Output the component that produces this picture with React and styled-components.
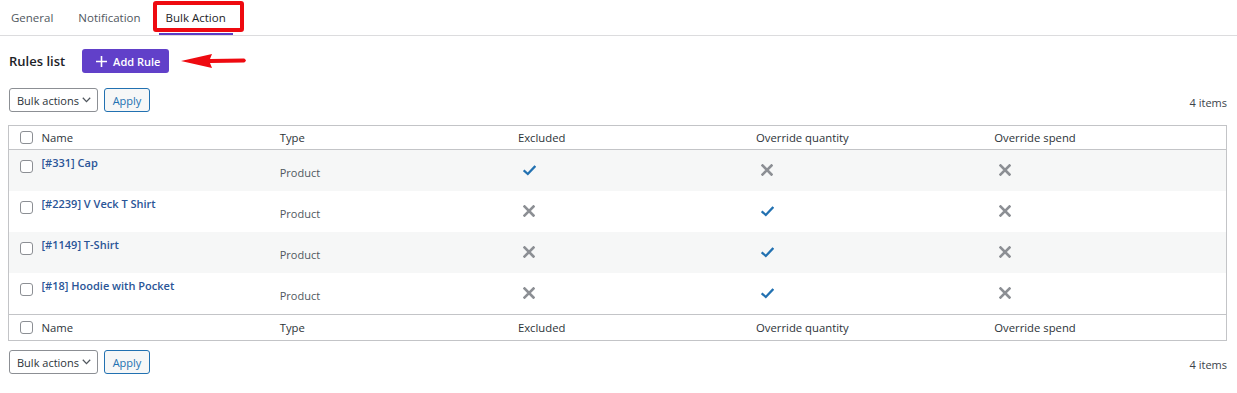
import React from "react";
import styled, { createGlobalStyle } from "styled-components";

const Global = createGlobalStyle`
  html, body { margin: 0; padding: 0; background: #fff; }
  body { font-family: "Open Sans", "Noto Sans", sans-serif; font-size: 11.5px; color: #2c3338; }
  * { box-sizing: border-box; }
`;

const Page = styled.div`
  width: 1237px;
  padding-bottom: 19px;
`;

const TabNav = styled.nav`
  display: flex;
  gap: 11px;
  padding-left: 4px;
  border-bottom: 1px solid #dcdcde;
  height: 36px;
`;

const Tab = styled.div`
  position: relative;
  display: flex;
  align-items: center;
  padding: 1px 7px 0;
  height: 35px;
  font-size: 11.5px;
  white-space: nowrap;
  color: ${(p) => (p.$active ? "#1d2327" : "#50575e")};
  border-bottom: 2px solid ${(p) => (p.$active ? "#5b3cc4" : "transparent")};
`;

const Highlight = styled.span`
  position: absolute;
  left: -6px;
  right: -11px;
  top: 1px;
  bottom: 1px;
  border: 4px solid #ee0a10;
  border-radius: 3px;
  pointer-events: none;
`;

const Content = styled.div`
  padding: 0 10px 0 8px;
`;

const HeadingRow = styled.div`
  display: flex;
  align-items: center;
  margin-top: 13px;
  padding-left: 1px;
  height: 24px;
`;

const Title = styled.h2`
  margin: 0 17px 0 0;
  font-size: 13px;
  font-weight: 600;
  color: #1d2327;
  white-space: nowrap;
`;

const PrimaryButton = styled.button`
  display: flex;
  align-items: center;
  gap: 6px;
  height: 24px;
  width: 87px;
  padding: 0 0 0 14px;
  border: none;
  border-radius: 3px;
  background: #6140c9;
  color: #fff;
  font-family: inherit;
  font-size: 11px;
  font-weight: 600;
  white-space: nowrap;
`;

const Arrow = styled.svg`
  margin-left: 12px;
  display: block;
`;

const NavRow = styled.div`
  display: flex;
  align-items: center;
  margin-top: ${(p) => p.$top}px;
  padding-left: 1px;
  height: 24px;
`;

const Select = styled.div`
  display: flex;
  align-items: center;
  justify-content: space-between;
  width: 89px;
  height: 24px;
  padding: 0 6px 0 7px;
  border: 1px solid #8c8f94;
  border-radius: 3px;
  font-size: 11px;
  white-space: nowrap;
  color: #2c3338;
`;

const ApplyButton = styled.button`
  margin-left: 6px;
  width: 46px;
  height: 24px;
  border: 1px solid #2271b1;
  border-radius: 3px;
  background: #f6f7f7;
  color: #2271b1;
  font-family: inherit;
  font-size: 11px;
  padding: 0;
`;

const Count = styled.span`
  margin-left: auto;
  margin-top: 5px;
  font-size: 11px;
  color: #3c434a;
  white-space: nowrap;
`;

const Table = styled.table`
  margin-top: 13px;
  width: 1219px;
  border-collapse: collapse;
  table-layout: fixed;
  border: 1px solid #c3c4c7;
`;

const Th = styled.th`
  text-align: left;
  font-weight: 400;
  font-size: 11.3px;
  color: #2c3338;
  height: ${(p) => (p.$foot ? 26 : 24)}px;
  padding: 0 6px;
  vertical-align: middle;
  white-space: nowrap;
  ${(p) => (p.$foot ? "border-top: 1px solid #c3c4c7;" : "border-bottom: 1px solid #c3c4c7;")}
`;

const CheckTh = styled(Th)`
  width: 27px;
  padding: 0 0 0 11px;
`;

const Row = styled.tr`
  background: ${(p) => (p.$alt ? "#f6f7f7" : "#fff")};
`;

const Td = styled.td`
  height: ${(p) => (p.$h ? p.$h : 41)}px;
  padding: 4px 6px 0 6px;
  vertical-align: middle;
  font-size: 11px;
  color: #50575e;
`;

const TitleTd = styled(Td)`
  vertical-align: top;
  padding-top: 5px;
`;

const CheckTd = styled(Td)`
  vertical-align: top;
  padding: 10px 0 0 11px;
`;

const IconTd = styled(Td)`
  padding: 0 6px 0 11px;
`;

const Box = styled.span`
  display: block;
  width: 13px;
  height: 13px;
  border: 1px solid #8c8f94;
  border-radius: 3px;
  background: #fff;
`;

const RowLink = styled.a`
  color: #2a5597;
  font-weight: 600;
  font-size: 11px;
  text-decoration: none;
  white-space: nowrap;
`;

const Check = () => (
  <svg width="13" height="11" viewBox="0 0 13 11" style={{ display: "block" }}>
    <polyline points="1.5,6 4.8,9 11.5,1.8" fill="none" stroke="#2271b1" strokeWidth="2.3" strokeLinecap="square" />
  </svg>
);

const Cross = () => (
  <svg width="12" height="12" viewBox="0 0 12 12" style={{ display: "block" }}>
    <path d="M1.5 1.5L10.5 10.5M10.5 1.5L1.5 10.5" stroke="#8c8f94" strokeWidth="2.6" strokeLinecap="square" />
  </svg>
);

const Plus = () => (
  <svg width="11" height="11" viewBox="0 0 11 11" style={{ display: "block" }}>
    <path d="M5.5 0V11M0 5.5H11" stroke="#fff" strokeWidth="1.6" />
  </svg>
);

const Chevron = () => (
  <svg width="9" height="6" viewBox="0 0 9 6" style={{ display: "block" }}>
    <polyline points="0.8,0.8 4.5,4.6 8.2,0.8" fill="none" stroke="#50575e" strokeWidth="1.3" />
  </svg>
);

const rules = [
  { name: "[#331] Cap", ex: true, oq: false, os: false, h: 41 },
  { name: "[#2239] V Veck T Shirt", ex: false, oq: true, os: false, h: 41 },
  { name: "[#1149] T-Shirt", ex: false, oq: true, os: false, h: 41 },
  { name: "[#18] Hoodie with Pocket", ex: false, oq: true, os: false, h: 42 },
];

const Cols = ({ foot }) => (
  <tr>
    <CheckTh $foot={foot}><Box /></CheckTh>
    <Th $foot={foot}>Name</Th>
    <Th $foot={foot}>Type</Th>
    <Th $foot={foot}>Excluded</Th>
    <Th $foot={foot}>Override quantity</Th>
    <Th $foot={foot}>Override spend</Th>
  </tr>
);

const BulkNav = ({ top }) => (
  <NavRow $top={top}>
    <Select>
      Bulk actions
      <Chevron />
    </Select>
    <ApplyButton>Apply</ApplyButton>
    <Count>4 items</Count>
  </NavRow>
);

export default function App() {
  return (
    <Page>
      <Global />
      <TabNav>
        <Tab>General</Tab>
        <Tab>Notification</Tab>
        <Tab $active>
          Bulk Action
          <Highlight />
        </Tab>
      </TabNav>
      <Content>
        <HeadingRow>
          <Title>Rules list</Title>
          <PrimaryButton>
            <Plus />
            Add Rule
          </PrimaryButton>
          <Arrow width="66" height="16" viewBox="0 0 66 16">
            <polygon points="0,8 31,1 29,6 63,5.5 64,6 65,7.5 64,9 63,9.6 29,10 31,15" fill="#ee0a10" />
          </Arrow>
        </HeadingRow>
        <BulkNav top={15} />
        <Table>
          <thead>
            <Cols />
          </thead>
          <tbody>
            {rules.map((r, i) => (
              <Row key={r.name} $alt={i % 2 === 0}>
                <CheckTd $h={r.h}><Box /></CheckTd>
                <TitleTd $h={r.h}><RowLink href="#">{r.name}</RowLink></TitleTd>
                <Td $h={r.h}>Product</Td>
                <IconTd $h={r.h}>{r.ex ? <Check /> : <Cross />}</IconTd>
                <IconTd $h={r.h}>{r.oq ? <Check /> : <Cross />}</IconTd>
                <IconTd $h={r.h}>{r.os ? <Check /> : <Cross />}</IconTd>
              </Row>
            ))}
          </tbody>
          <tfoot>
            <Cols foot />
          </tfoot>
        </Table>
        <BulkNav top={9} />
      </Content>
    </Page>
  );
}
